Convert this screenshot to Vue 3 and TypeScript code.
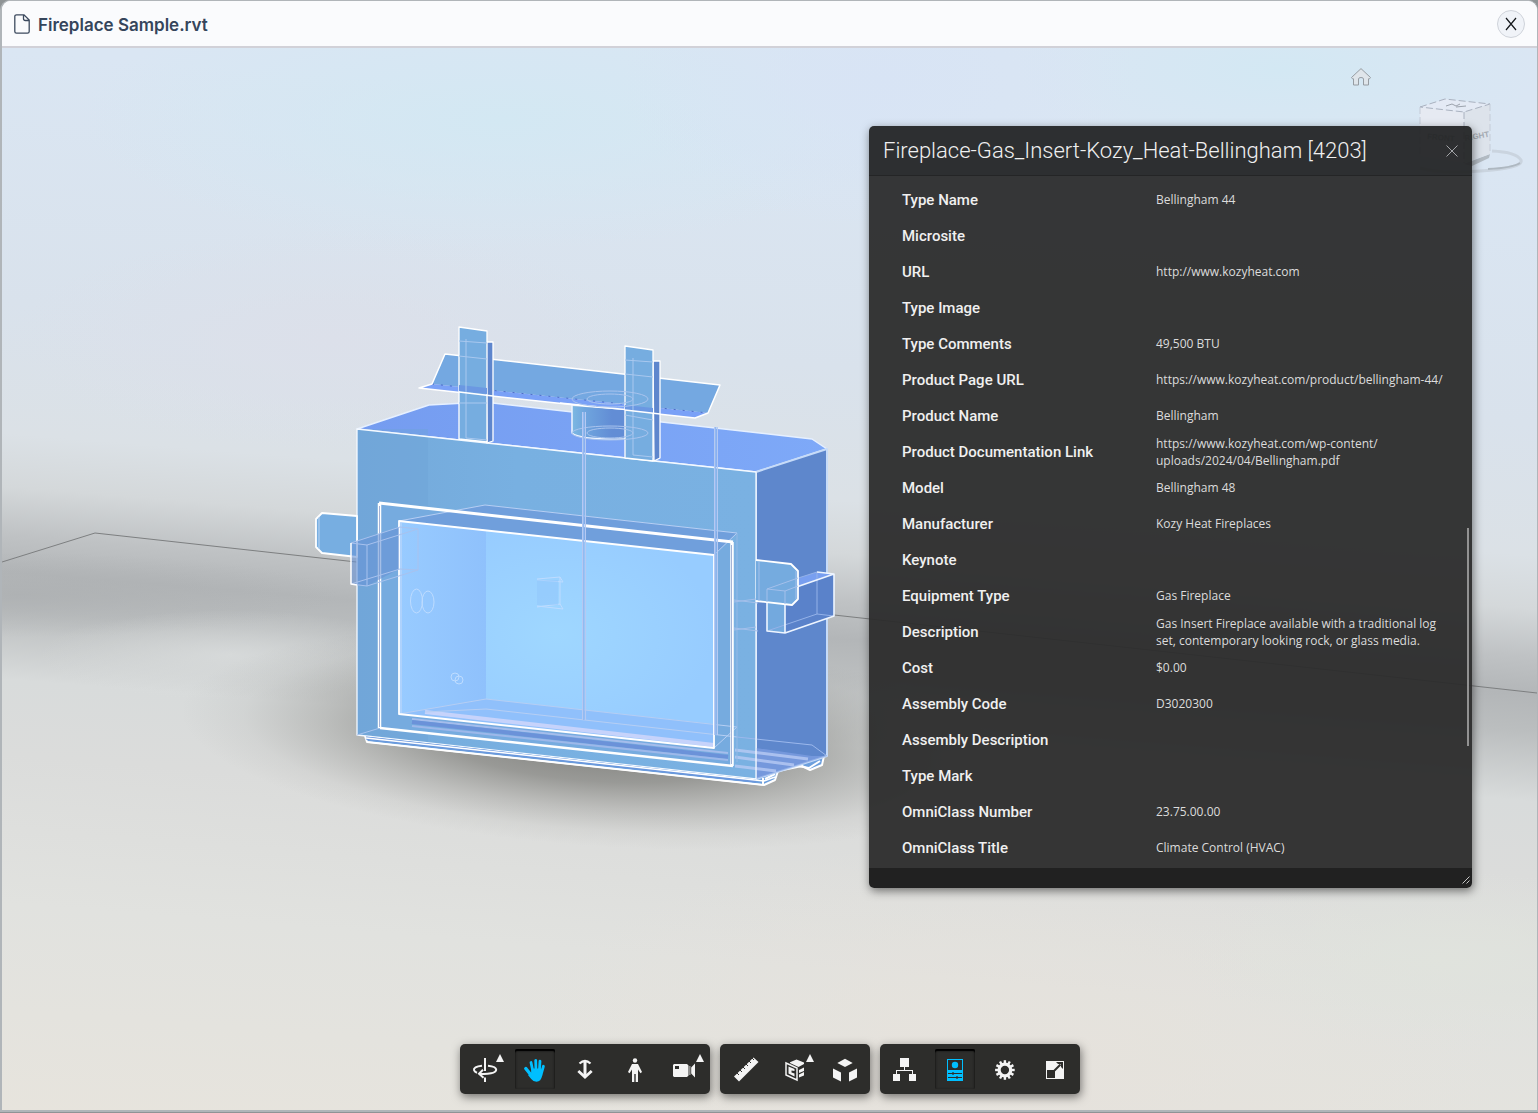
<script setup lang="ts">
interface Property {
  label: string
  value: string
}

interface Tool {
  id: string
  title: string
  active?: boolean
  menu?: boolean
}

const properties: Property[] = [
  { label: 'Type Name', value: 'Bellingham 44' },
  { label: 'Microsite', value: '' },
  { label: 'URL', value: 'http://www.kozyheat.com' },
  { label: 'Type Image', value: '' },
  { label: 'Type Comments', value: '49,500 BTU' },
  { label: 'Product Page URL', value: 'https://www.kozyheat.com/product/bellingham-44/' },
  { label: 'Product Name', value: 'Bellingham' },
  { label: 'Product Documentation Link', value: 'https://www.kozyheat.com/wp-content/\nuploads/2024/04/Bellingham.pdf' },
  { label: 'Model', value: 'Bellingham 48' },
  { label: 'Manufacturer', value: 'Kozy Heat Fireplaces' },
  { label: 'Keynote', value: '' },
  { label: 'Equipment Type', value: 'Gas Fireplace' },
  { label: 'Description', value: 'Gas Insert Fireplace available with a traditional log\nset, contemporary looking rock, or glass media.' },
  { label: 'Cost', value: '$0.00' },
  { label: 'Assembly Code', value: 'D3020300' },
  { label: 'Assembly Description', value: '' },
  { label: 'Type Mark', value: '' },
  { label: 'OmniClass Number', value: '23.75.00.00' },
  { label: 'OmniClass Title', value: 'Climate Control (HVAC)' },
]

const toolGroups: Tool[][] = [
  [
    { id: 'orbit', title: 'Orbit', menu: true },
    { id: 'pan', title: 'Pan', active: true },
    { id: 'dolly', title: 'Zoom' },
    { id: 'walk', title: 'First person' },
    { id: 'camera', title: 'Camera interactions', menu: true },
  ],
  [
    { id: 'measure', title: 'Measure' },
    { id: 'section', title: 'Section analysis', menu: true },
    { id: 'explode', title: 'Explode model' },
  ],
  [
    { id: 'tree', title: 'Model browser' },
    { id: 'properties', title: 'Properties', active: true },
    { id: 'settings', title: 'Settings' },
    { id: 'fullscreen', title: 'Full screen' },
  ],
]

const gearTeeth: number[] = Array.from({ length: 12 }, (_, i) => i * 30)
const rulerTicks: number[] = [0, 1, 2, 3, 4, 5]
</script>

<template>
  <div class="backdrop">
    <main class="window">
      <header class="titlebar">
        <svg class="file-icon" width="16" height="20" viewBox="0 0 16 20" aria-hidden="true">
          <path d="M2.500 .8H10L15.200 6V17.500a1.700 1.700 0 0 1-1.700 1.700h-11A1.700 1.700 0 0 1 .8 17.500v-15A1.700 1.700 0 0 1 2.500 .8ZM9.500 1v3.800a1.700 1.700 0 0 0 1.700 1.700h3.800" fill="none" stroke="#3c4a5e" stroke-width="1.300" />
        </svg>
        <h1 class="file-name">Fireplace Sample.rvt</h1>
        <button class="close-window" type="button" aria-label="Close">
          <svg width="12" height="14" viewBox="0 0 12 14"><path d="M1 1L11 13M11 1L1 13" stroke="#15181c" stroke-width="1.200" /></svg>
        </button>
      </header>

      <section class="viewer">
        <svg class="scene" viewBox="2 48 1535 1062" preserveAspectRatio="xMidYMid slice" aria-hidden="true">
          <defs>
            <linearGradient id="env" gradientUnits="userSpaceOnUse" x1="0" y1="48" x2="-85" y2="1110">
              <stop offset="0" stop-color="#dae6f3" />
              <stop offset=".236" stop-color="#d9e2ec" />
              <stop offset=".36" stop-color="#dbe1e6" />
              <stop offset=".41" stop-color="#d4d8da" />
              <stop offset=".455" stop-color="#bfc2c4" />
              <stop offset=".49" stop-color="#b3b6b8" />
              <stop offset=".525" stop-color="#bbbebf" />
              <stop offset=".59" stop-color="#d8dbdb" />
              <stop offset=".66" stop-color="#dbdcdb" />
              <stop offset=".8" stop-color="#e1e2df" />
              <stop offset="1" stop-color="#e7e4dd" />
            </linearGradient>
            <radialGradient id="cyan"><stop offset="0" stop-color="#d3e8f3" /><stop offset="1" stop-color="#d3e8f3" stop-opacity="0" /></radialGradient>
            <radialGradient id="blue"><stop offset="0" stop-color="#d8e4f5" /><stop offset="1" stop-color="#d8e4f5" stop-opacity="0" /></radialGradient>
            <radialGradient id="lilac"><stop offset="0" stop-color="#dce0ea" /><stop offset="1" stop-color="#dce0ea" stop-opacity="0" /></radialGradient>
            <radialGradient id="sand"><stop offset="0" stop-color="#e6e2dc" /><stop offset="1" stop-color="#e6e2dc" stop-opacity="0" /></radialGradient>
            <radialGradient id="mint"><stop offset="0" stop-color="#e0e3dd" /><stop offset="1" stop-color="#e0e3dd" stop-opacity="0" /></radialGradient>
            <radialGradient id="glow"><stop offset="0" stop-color="#dde0e0" stop-opacity=".7" /><stop offset="1" stop-color="#dde0e0" stop-opacity="0" /></radialGradient>
            <radialGradient id="dusk"><stop offset="0" stop-color="#abaeb0" stop-opacity=".7" /><stop offset="1" stop-color="#abaeb0" stop-opacity="0" /></radialGradient>
            <radialGradient id="shade">
              <stop offset="0" stop-color="#70706c" stop-opacity=".9" />
              <stop offset=".4" stop-color="#7a7a76" stop-opacity=".68" />
              <stop offset=".65" stop-color="#848480" stop-opacity=".34" />
              <stop offset=".85" stop-color="#8a8a86" stop-opacity=".09" />
              <stop offset="1" stop-color="#8a8a86" stop-opacity="0" />
            </radialGradient>
            <linearGradient id="front" x1="0" x2="1"><stop offset="0" stop-color="#74a9da" /><stop offset=".4" stop-color="#78b0e1" /><stop offset="1" stop-color="#7ab1e2" /></linearGradient>
            <linearGradient id="wall" x1="0" x2="1"><stop offset="0" stop-color="#98cbff" /><stop offset="1" stop-color="#8fc1fc" /></linearGradient>
            <radialGradient id="glass"><stop offset="0" stop-color="#9fd7ff" /><stop offset="1" stop-color="#97ccff" /></radialGradient>
            <linearGradient id="flue" x1="0" x2="1"><stop offset="0" stop-color="#7cb8e2" /><stop offset=".25" stop-color="#6fa5de" /><stop offset=".75" stop-color="#628dd5" /><stop offset="1" stop-color="#628dd5" /></linearGradient>
            <linearGradient id="top" x1="0" x2="1"><stop offset="0" stop-color="#759cf0" /><stop offset="1" stop-color="#7ea9f8" /></linearGradient>
          </defs>

          <rect x="0" y="40" width="1540" height="1080" fill="url(#env)" />
          <ellipse cx="500" cy="120" rx="420" ry="130" fill="url(#cyan)" />
          <ellipse cx="1280" cy="70" rx="260" ry="90" fill="url(#cyan)" />
          <ellipse cx="880" cy="80" rx="260" ry="150" fill="url(#blue)" />
          <ellipse cx="330" cy="340" rx="320" ry="110" fill="url(#lilac)" />
          <ellipse cx="1000" cy="1060" rx="500" ry="220" fill="url(#sand)" />
          <ellipse cx="1440" cy="960" rx="260" ry="90" fill="url(#mint)" />
          <ellipse cx="20" cy="595" rx="320" ry="42" fill="url(#dusk)" />
          <ellipse cx="230" cy="655" rx="190" ry="45" fill="url(#glow)" />
          <ellipse cx="595" cy="738" rx="415" ry="108" fill="url(#shade)" transform="rotate(4 595 738)" />
          <path d="M2 562L95 533L1537 693" fill="none" stroke="#7d7f80" />

          <g stroke-linejoin="round">
            <!-- mounting feet -->
            <path d="M365 736L367 742L764 785L775 780L778 771L802 766L810 770L822 765L824 756" fill="#6c9fdd" stroke="#fff" stroke-width="2" />
            <path d="M763 778V784M775 774L765 779M798 766L809 768L820 761" fill="none" stroke="#fff" stroke-width="2" />
            <!-- cabinet -->
            <path d="M357 429L429 405L484 402L812 439L827 449L756 472Z" fill="url(#top)" stroke="#e6f0ff" stroke-width="1.500" />
            <path d="M756 472L827 449V756L756 779Z" fill="#5e87cc" stroke="#c6dbf8" stroke-width="2" />
            <path d="M357 429L756 472V779L357 735Z" fill="url(#front)" />
            <path d="M357 429H428V742L357 735Z" fill="#6ea3d8" opacity=".4" />
            <path d="M756 748L812 756L827 756L756 779Z" fill="#7f9fe2" opacity=".7" />
            <path d="M735 750L808 759M735 757L794 765M735 766L776 771" fill="none" stroke="#b8caf4" stroke-width="3" opacity=".8" />
            <path d="M737 737L812 745L827 756" fill="none" stroke="#9cb8ec" />
            <path d="M357 429L756 472V779L357 735Z" fill="none" stroke="#f4f9ff" stroke-width="1.300" />
            <path d="M357 735L380 728" stroke="#a9c4ee" />
            <path d="M366 738L756 781" stroke="#6a96dc" stroke-width="3" />
            <path d="M366 738L764 781L775 777M367 742L764 785" fill="none" stroke="#fff" stroke-width="1.500" />

            <!-- hood -->
            <path d="M445 354L720 385L708 413L432 384Z" fill="#74a8e1" />
            <path d="M432 384L708 413L695 418L419 388Z" fill="#7aa1f7" />
            <path d="M432 384L708 413" fill="none" stroke="#4d6dca" stroke-dasharray="2 7" />
            <path d="M445 354L720 385L708 413L695 418L419 388L432 384Z" fill="none" stroke="#fff" stroke-width="1.500" />

            <!-- flue collar -->
            <path d="M572 406L625 410V440Q580 440 572 433Z" fill="url(#flue)" />
            <path d="M572 405V433Q580 440 625 439" fill="none" stroke="#eef5ff" stroke-width="1.500" />
            <path d="M560 403L650 412" stroke="#fff" stroke-width="1.500" />

            <!-- standoff posts -->
            <g stroke="#fff" stroke-width="1.300">
              <path d="M486 342L493 342V441L487 443Z" fill="#5e86cd" />
              <path d="M459 327L487 331V442L459 439Z" fill="#76ade0" />
              <path d="M653 361L660 361V458L654 461Z" fill="#5e86cd" />
              <path d="M625 346L653 350V461L625 458Z" fill="#76ade0" />
            </g>
            <path d="M459 385L487 388V394L459 391ZM625 405L653 408V413L625 410Z" fill="#6b98e2" />
            <path d="M459 341L487 343M466 339V438L487 440M459 356L487 359M459 403L487 403M625 360L653 362M633 358V455L653 457M625 374L653 377M625 415L653 420" fill="none" stroke="#a9c8ef" />
            <path d="M459 392L493 396M625 410L660 414" stroke="#fff" stroke-width="1.500" />
            <g fill="none" stroke="#a9c4ee">
              <ellipse cx="610" cy="399" rx="38" ry="8" /><ellipse cx="610" cy="399" rx="23" ry="5" />
              <ellipse cx="610" cy="433" rx="38" ry="7" /><ellipse cx="610" cy="433" rx="23" ry="5" />
            </g>

            <!-- fire opening -->
            <path d="M380 504L733 543V767L380 728Z" fill="#76abdf" />
            <path d="M399 521L485 505L737 533L714 555Z" fill="#709fdc" />
            <path d="M399 521L714 555V748L399 714Z" fill="url(#glass)" />
            <path d="M399 521L486 530V700L399 714Z" fill="url(#wall)" />
            <path d="M399 714L486 699L714 724V748Z" fill="#90c0fb" />
            <path d="M425 712L714 745" stroke="#c6d3fb" stroke-width="4" />
            <path d="M412 719L728 753" stroke="#a5bdec" stroke-width="2" />
            <path d="M412 722L728 757" stroke="#6b92d9" stroke-width="4" />
            <path d="M412 726L728 760" stroke="#9db8ea" stroke-width="2" />
            <path d="M399 521L485 505L737 533L714 555M399 714L486 699L737 727L714 748M425 712L486 709L737 737" fill="none" stroke="#b6cef3" />
            <path d="M717 555V735M737 533V762" stroke="#94b9e6" />
            <path d="M379 503L733 542" stroke="#fff" stroke-width="3" />
            <path d="M380 728L733 766" stroke="#fff" stroke-width="2.500" />
            <path d="M379.500 503V728M732 542V766" stroke="#fff" stroke-width="3.500" />
            <path d="M379.500 506V727M731.500 545V764" stroke="#8d9fcb" stroke-width=".8" />
            <path d="M399 521L714 555V748L399 714Z" fill="none" stroke="#fff" stroke-width="1.800" />
            <path d="M401 522V713" stroke="#c3d9fa" />

            <!-- support rods -->
            <path d="M583.500 412V720M715.500 427V735" stroke="#94b9f0" stroke-width="2" />
            <path d="M582.500 412V720M585.500 412V720M714.500 427V735M717.500 427V735" stroke="#b5c9f2" stroke-width="1" />

            <!-- side tabs and brackets -->
            <path d="M357 516L322 513L316 519V547L322 553L357 557Z" fill="#77aee1" stroke="#fff" stroke-width="1.800" />
            <path d="M319 517V549" stroke="#bdd6f3" />
            <path d="M351 543L399 527V569L367 586L351 584Z" fill="#6892d6" opacity=".6" />
            <path d="M351 543L400 527L418 529V570L367 586L351 584M351 543L367 545L418 529M367 545V586M351 584L400 569L418 570" fill="none" stroke="#a8c2ee" />
            <path d="M351 543V584L357 585" fill="none" stroke="#fff" stroke-width="1.500" />
            <path d="M785 591L834 574V616L785 633Z" fill="#5a82ca" />
            <path d="M767 588L817 572L834 574L785 591Z" fill="#789ff0" />
            <path d="M767 588L785 591V633L767 631Z" fill="#73a9de" />
            <path d="M767 588L817 572V614L767 631M817 614L834 616" fill="none" stroke="#94b2e8" />
            <path d="M785 591L834 574V616L785 633L767 631V588M785 591V633M817 572L834 574" fill="none" stroke="#eef5ff" stroke-width="1.600" />
            <path d="M756 560L791 564L798 571V599L792 605L756 601" fill="#75abdf" stroke="#fff" stroke-width="1.800" />
            <path d="M759 562V601M796 571V599M767 589L798 578M767 589L785 591L798 586M767 589V602M785 591V604" fill="none" stroke="#a4c0eb" />
            <path d="M734 600L758 603M734 602L756 599M734 628L758 631M734 630L756 627" stroke="#a4c0eb" />

            <!-- burner fittings -->
            <g fill="none" stroke="#bedcff">
              <ellipse cx="416.500" cy="601" rx="6" ry="12" /><ellipse cx="428" cy="602" rx="6" ry="11" />
              <circle cx="455" cy="677" r="4" /><circle cx="459" cy="680" r="4" />
              <path d="M537 579L560 577L563 582M537 580L563 582M537 606L563 609M537 607L560 604L563 609M560 577V605" />
            </g>
            <path d="M537 580H558V605H537Z" fill="#8fc4fb" opacity=".4" />
          </g>

          <!-- view cube -->
          <g>
            <path d="M1420 168Q1440 174 1480 171Q1524 168 1521 160Q1516 152 1492 151" fill="none" stroke="#c3ccd6" stroke-width="3" opacity=".7" />
            <path d="M1488 169Q1512 168 1520 163" fill="none" stroke="#aeb8c1" stroke-width="2" />
            <path d="M1464 164L1490 154L1489 158L1472 166Z" fill="#b2bac2" />
            <path d="M1420 107L1445 99L1490 104L1464 112Z" fill="#e4eaf5" />
            <path d="M1420 107L1464 112V163L1420 156Z" fill="#e6eaf2" />
            <path d="M1464 112L1490 104V154L1464 163Z" fill="#dde3eb" />
            <path d="M1420 107L1445 99L1490 104L1464 112ZM1464 112V163" fill="none" stroke="#aab2c0" stroke-dasharray="7 3" />
            <path d="M1420 107V156M1490 104V154" fill="none" stroke="#c4cbd7" stroke-dasharray="7 3" />
            <path d="M1446 106L1452 104L1456 106L1460 104M1456 107L1466 106" fill="none" stroke="#9ca3ad" />
            <text x="1465" y="141" class="cube-label" transform="rotate(-10 1465 141)">RIGHT</text>
            <text x="1427" y="139" class="cube-label" transform="rotate(5 1427 139)">FRONT</text>
          </g>
        </svg>

        <button class="home" type="button" aria-label="Home view">
          <svg width="20" height="18" viewBox="0 0 20 18"><path d="M10 .6L19.500 9.500L18.500 10.800H17.500V17H12.500V11Q12.500 9.500 10 9.500T7.500 11V17H2.500V10.800H1.500L.5 9.500Z" fill="#dfe5ea" stroke="#969ca2" /></svg>
        </button>

        <aside class="panel" aria-label="Properties">
          <header class="panel-head">
            <h2 class="panel-title">Fireplace-Gas_Insert-Kozy_Heat-Bellingham [4203]</h2>
            <button class="panel-close" type="button" aria-label="Close panel">
              <svg width="12" height="12" viewBox="0 0 12 12"><path d="M.5 .5L11.500 11.500M11.500 .5L.5 11.500" stroke="#a3a5a8" /></svg>
            </button>
          </header>
          <div class="panel-body">
            <table class="properties">
              <tbody>
                <tr v-for="item in properties" :key="item.label">
                  <th scope="row">{{ item.label }}</th>
                  <td>{{ item.value }}</td>
                </tr>
              </tbody>
            </table>
            <span class="scroll-thumb"></span>
          </div>
          <footer class="panel-foot">
            <svg width="8" height="8" viewBox="0 0 8 8"><path d="M.5 7.500L7.500 .5M4.500 7.500L7.500 4.500" stroke="#c5c5c5" /></svg>
          </footer>
        </aside>

        <nav class="toolbar" aria-label="Viewer tools">
          <div v-for="(group, index) in toolGroups" :key="index" class="tool-group">
            <button v-for="tool in group" :key="tool.id" type="button" class="tool" :class="{ active: tool.active }" :aria-label="tool.title" :aria-pressed="tool.active ? 'true' : 'false'">
              <svg width="28" height="28" viewBox="0 0 28 28" fill="currentColor">
                <g v-if="tool.id === 'orbit'" fill="none" stroke="currentColor" stroke-width="2">
                  <path d="M14 2V15M14 21.500V26" />
                  <path d="M11 9.700C5 10.300 2.500 12 3 14C3.300 15.300 4.500 16.200 6 16.800M17 9.700C23 10.300 25.200 12 25.200 13.700C25 17 17 18.600 8.500 17.800" />
                  <path d="M12 13.800L8 17.800L12.500 21.800" />
                </g>
                <g v-else-if="tool.id === 'pan'">
                  <path d="M10 6.500L12 16M14.700 4.500L15 16M19 5.200L18.300 16M22.400 10.300L20 19" fill="none" stroke="currentColor" stroke-width="2.800" stroke-linecap="round" />
                  <path d="M4.800 12.500L10 19" stroke="currentColor" stroke-width="3.400" stroke-linecap="round" />
                  <path d="M10.700 12.500H20.500L21.200 19.500Q20 25.700 15.500 25.700Q12.200 25.700 10.200 23L7 19L10 17.500Z" />
                </g>
                <g v-else-if="tool.id === 'dolly'" fill="none" stroke="currentColor">
                  <path d="M14 5V21" stroke-width="3" />
                  <path d="M8.500 7.500Q14 2.500 19.500 7.500" stroke-width="2.200" />
                  <path d="M7.300 15L14 21L20.700 15" stroke-width="2.800" />
                </g>
                <g v-else-if="tool.id === 'walk'">
                  <circle cx="14" cy="4.500" r="2.200" />
                  <path d="M11 8H17L21 16L19.500 17.200L17 13.500V26H14.700V18H13.300V26H11V13.500L8.500 17.200L7 16Z" />
                </g>
                <g v-else-if="tool.id === 'camera'">
                  <path fill-rule="evenodd" d="M3 8H16L17.500 9.500V19.500L16 21H3L2 20V9ZM4 10V13H8V10Z" />
                  <path d="M18.500 10H19.300V19H18.500ZM20.200 11.500L24 7.500V21.500L20.200 17.500Z" />
                </g>
                <g v-else-if="tool.id === 'measure'">
                  <path d="M3 20.500L22.500 1.500L27.500 6L8 25.500Z" />
                  <path v-for="n in rulerTicks" :key="n" :d="`M${6 + n * 3} ${17 - n * 3}l2 2`" stroke="#2d2d2b" />
                </g>
                <g v-else-if="tool.id === 'section'">
                  <path d="M9 6.200L15.500 3.500L23 6.500V8L17.500 11L9 7ZM18 14L23 11.500V15L18 17ZM18 18.500L23 16V19.500L18 21.500Z" />
                  <path d="M5 7L16 12V24L5 19Z" fill="#2d2d2b" stroke="currentColor" stroke-width="1.500" />
                  <path d="M7.500 10.500L13.500 13V15L10.500 14.500V16.500L13.500 17.500V20.500L7.500 17.500Z" />
                </g>
                <path v-else-if="tool.id === 'explode'" d="M14 2.700L21.700 7L14 11L6.300 7ZM2 12.500L10 16.500V25.500L2 21.500ZM26 12.500L18 16.500V25.500L26 21.500Z" />
                <path v-else-if="tool.id === 'tree'" d="M9 2H18V11H14V14H22V18H25V25H18V18H21V15H6V18H9V25H2V18H5V14H13V11H9Z" />
                <g v-else-if="tool.id === 'properties'">
                  <path fill-rule="evenodd" d="M6 3H22V25H6ZM7 4V14H21V4Z" />
                  <circle cx="14" cy="9" r="3.200" />
                  <path d="M7 17.500H21M7 21.500H21M12 16V19M16 20V23" stroke="#2d2d2b" stroke-width="1.200" />
                </g>
                <g v-else-if="tool.id === 'settings'">
                  <rect v-for="angle in gearTeeth" :key="angle" x="12.700" y="4.200" width="2.400" height="4" :transform="`rotate(${angle} 13.900 14)`" />
                  <circle cx="13.900" cy="14" r="5.800" fill="none" stroke="currentColor" stroke-width="3.200" />
                </g>
                <g v-else>
                  <path fill-rule="evenodd" d="M5 5H23V23H5ZM6 14V22H14V14Z" />
                  <path d="M12.500 15.500L19.500 8.500" stroke="#2d2d2b" stroke-width="2" />
                  <path d="M15 6H22V13L20 11V8H17Z" fill="#2d2d2b" />
                </g>
              </svg>
              <span v-if="tool.menu" class="menu-arrow"></span>
            </button>
          </div>
        </nav>
      </section>
    </main>
  </div>
</template>

<style>
body {
  margin: 0;
}
</style>

<style scoped>
.backdrop {
  box-sizing: border-box;
  height: 100vh;
  background: #8f9496;
  padding-bottom: 1px;
}

.window {
  box-sizing: border-box;
  display: flex;
  flex-direction: column;
  height: 100%;
  border: solid #b0b5b9;
  border-width: 1px 1px 2px 2px;
  border-radius: 10px 10px 0 0;
  background: #fafbfd;
  overflow: hidden;
}

.titlebar {
  display: flex;
  flex: none;
  align-items: center;
  box-sizing: border-box;
  height: 47px;
  padding: 0 12px;
  border-bottom: 2px solid #d1d1d8;
  background: #fafbfd;
}

.file-name {
  flex: 1;
  margin: 0 0 0 8px;
  padding-top: 2px;
  color: #35455b;
  font: 600 17px/24px Inter, sans-serif;
}

.close-window {
  display: flex;
  align-items: center;
  justify-content: center;
  width: 28px;
  height: 28px;
  padding: 0;
  border: 1px solid #cfd3da;
  border-radius: 50%;
  background: #f0f3f8;
}

.viewer {
  position: relative;
  flex: 1;
  min-height: 0;
  overflow: hidden;
}

.scene {
  display: block;
  width: 100%;
  height: 100%;
}

.cube-label {
  fill: #a5abb3;
  font: 700 8px "Liberation Sans", sans-serif;
}

.home {
  position: absolute;
  top: 20px;
  right: 166px;
  display: flex;
  padding: 0;
  border: 0;
  background: none;
}

.panel {
  position: absolute;
  top: 78px;
  right: 65px;
  display: flex;
  flex-direction: column;
  width: 603px;
  border-radius: 5px;
  box-shadow: 1px 3px 10px rgba(0, 0, 0, 0.5);
  color: #f0f0f0;
  font-family: "Open Sans", sans-serif;
  overflow: hidden;
}

.panel-head {
  display: flex;
  align-items: center;
  box-sizing: border-box;
  height: 50px;
  padding: 0 14px;
  border-bottom: 1px solid #242526;
  background: rgba(34, 35, 36, 0.94);
}

.panel-title {
  flex: 1;
  margin: 0;
  font: 300 22px/28px Roboto, sans-serif;
  white-space: nowrap;
}

.panel-close {
  display: flex;
  padding: 0;
  border: 0;
  background: none;
}

.panel-body {
  position: relative;
  padding: 6px 0 2px;
  background: rgba(42, 42, 42, 0.94);
}

.properties {
  width: 100%;
  table-layout: fixed;
  border-collapse: collapse;
}

.properties tr {
  height: 36px;
}

.properties th {
  width: 254px;
  padding: 0 0 0 33px;
  text-align: left;
  font: 500 15px/18px Roboto, sans-serif;
}

.properties td {
  padding: 0 12px 1px 0;
  color: #dcdcdc;
  font: 400 12px/17px "Open Sans", sans-serif;
  white-space: pre-line;
}

.scroll-thumb {
  position: absolute;
  top: 352px;
  right: 3px;
  width: 2px;
  height: 218px;
  background: #929292;
}

.panel-foot {
  display: flex;
  align-items: flex-end;
  justify-content: flex-end;
  box-sizing: border-box;
  height: 20px;
  padding: 0 2px 4px;
  background: #212121;
}

.toolbar {
  position: absolute;
  right: 0;
  bottom: 16px;
  left: 0;
  display: flex;
  justify-content: center;
  gap: 10px;
}

.tool-group {
  display: flex;
  gap: 10px;
  padding: 5px;
  border-radius: 5px;
  background: #2d2d2b;
  box-shadow: 1px 3px 10px rgba(0, 0, 0, 0.5);
}

.tool {
  position: relative;
  display: flex;
  align-items: center;
  justify-content: center;
  width: 40px;
  height: 40px;
  padding: 1px 0 0;
  border: 0;
  border-radius: 2px;
  background: none;
  color: #f4f4f4;
}

.tool.active {
  color: #00bfff;
  box-shadow: inset 0 2px 1px #000, inset 0 1px 3px #111;
}

.menu-arrow {
  position: absolute;
  top: 5px;
  right: 1px;
  border: 4px solid transparent;
  border-top: 0;
  border-bottom: 8px solid #f4f4f4;
}
</style>
